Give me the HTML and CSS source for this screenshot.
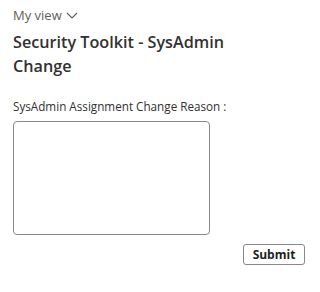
FILE: index.html
```html
<!DOCTYPE html>
<html>
<head>
<meta charset="utf-8">
<link rel="stylesheet" href="styles.css">
</head>
<body>
<div class="page">
  <div class="view">
    <span>My view</span>
    <svg class="chev" width="12" height="7" viewBox="0 0 12 7"><path d="M1 1 L6 6 L11 1" fill="none" stroke="#605e5c" stroke-width="1.1"/></svg>
  </div>
  <h1 class="title">Security Toolkit - SysAdmin Change</h1>
  <label class="label" for="reason">SysAdmin Assignment Change Reason :</label>
  <textarea id="reason" class="reason"></textarea>
  <div class="actions">
    <button class="submit">Submit</button>
  </div>
</div>
</body>
</html>
```

FILE: styles.css
```css
html, body {
  margin: 0;
  padding: 0;
  background: #ffffff;
}
.page {
  font-family: "Open Sans", "Noto Sans", sans-serif;
  padding: 7px 15px 0 13px;
  display: flex;
  flex-direction: column;
  align-items: flex-start;
}
.view {
  display: flex;
  align-items: center;
  gap: 4px;
  font-size: 13px;
  line-height: 16px;
  color: #605e5c;
}
.chev {
  margin-top: 1px;
}
.title {
  margin: 7px 0 0 0;
  width: 250px;
  font-size: 16.2px;
  line-height: 24px;
  font-weight: 600;
  color: #323130;
}
.label {
  margin-top: 21px;
  font-size: 11.7px;
  line-height: 14px;
  color: #323130;
}
.reason {
  margin: 8px 0 0 0;
  box-sizing: border-box;
  width: 197px;
  height: 114px;
  border: 1px solid #8a8886;
  border-radius: 4px;
  resize: none;
  padding: 4px;
  outline: none;
}
.actions {
  align-self: stretch;
  display: flex;
  justify-content: flex-end;
  margin-top: 9px;
}
.submit {
  box-sizing: border-box;
  width: 62px;
  height: 21px;
  padding: 0;
  background: #ffffff;
  border: 1px solid #8a8886;
  border-radius: 3px;
  font-family: "Open Sans", "Noto Sans", sans-serif;
  font-size: 12px;
  font-weight: 700;
  color: #201f1e;
}
```
